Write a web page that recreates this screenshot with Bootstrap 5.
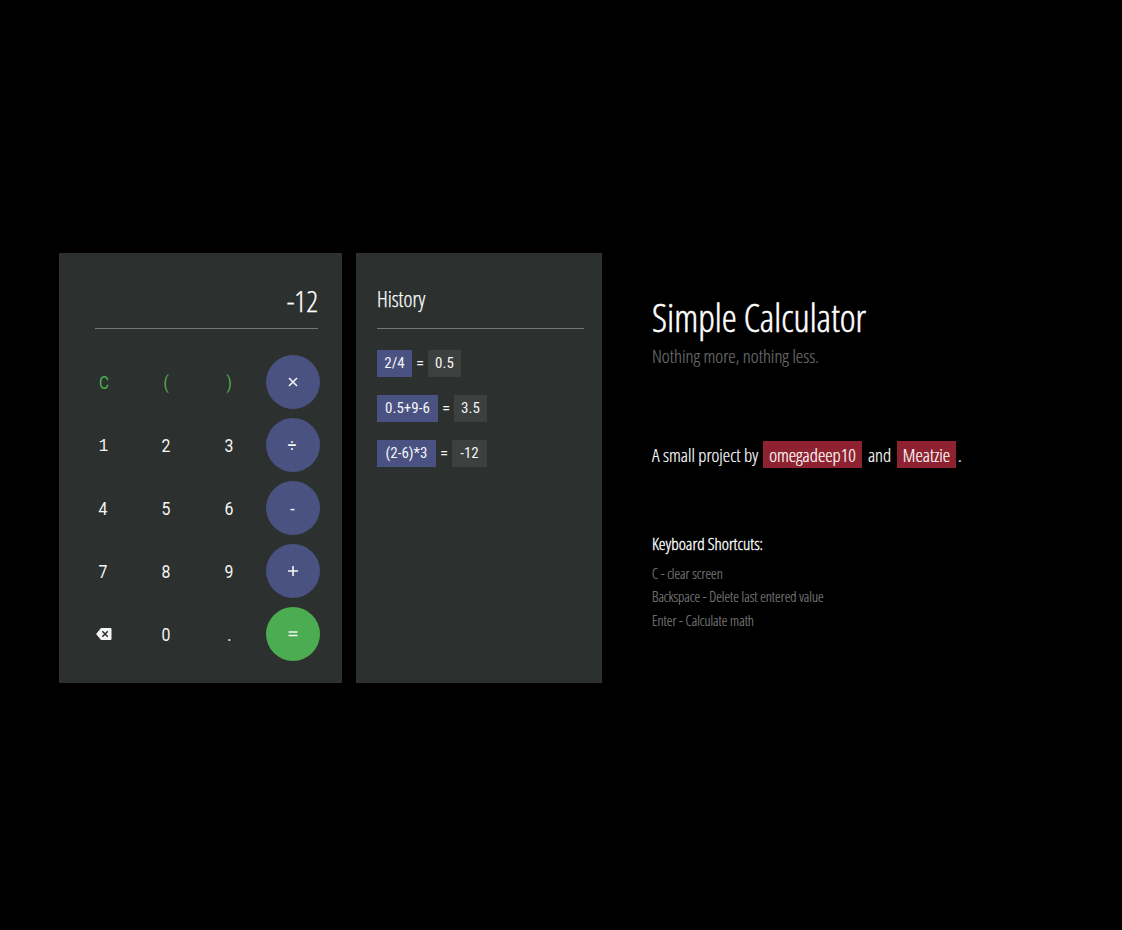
<!DOCTYPE html>
<html lang="en">
<head>
<meta charset="utf-8">
<meta name="viewport" content="width=device-width, initial-scale=1">
<title>Simple Calculator</title>
<link href="https://cdn.jsdelivr.net/npm/bootstrap@5.3.0/dist/css/bootstrap.min.css" rel="stylesheet">
<style>
body{background:#000;color:#fff;font-family:"Open Sans",sans-serif;font-weight:300;font-stretch:75%;padding:253px 0 0 59px;overflow:hidden;height:930px}
.panel{background:#2c302e;height:430px;flex:none}
.calc{width:283px;padding:0 22.5px 0 17px}
.hist{width:246px;margin-left:14px;padding:0 18px 0 21px}
.screen{height:76px;border-bottom:1px solid #777;line-height:42px;padding-top:27px;-webkit-text-stroke:.25px}
.calc .screen{margin:0 1.5px 26px 19px;font-size:29px}
.hist .screen{font-size:21.3px;line-height:38px;margin-bottom:21px}
.keys{display:grid;grid-template-columns:repeat(4,54px);gap:9px;margin-left:.5px;font-family:Roboto,sans-serif;font-weight:400}
.key{width:54px;height:54px;border-radius:50%;border:0;background:none;color:#f5f5f5;font-size:18px;line-height:54px;padding:0;display:flex;align-items:center;justify-content:center}
.key span{position:relative;top:.5px;transform:scaleX(.88)}
.key.fn{color:#4caf50}
.key.fn span{transform:scaleX(.85)}
.key.op{background:#4a5282}
.key.eq{background:#4bac52}
.key .mono{font-family:"Liberation Mono",monospace;font-size:18px;top:1px}
.entry{height:27px;margin-bottom:18px;font-family:Roboto,sans-serif;font-size:15px;font-weight:400;line-height:27px;color:#f5f5f5}
.chip{display:block;text-align:center;background:#4a5282;white-space:nowrap}
.chip.res{background:#3c403e}
.entry .sign{width:16px;text-align:center;font-size:17px}
.about{margin-left:50px;white-space:nowrap;-webkit-text-stroke:.2px}
h1{font-size:37.8px;line-height:50px;font-weight:300;margin:40px 0 0;-webkit-text-stroke:.5px}
.tagline{font-size:18.7px;line-height:26px;color:#6c6c6c;margin:0 0 72px}
.credits{font-size:18.6px;line-height:28px;margin:0 0 64px}
.credits a{color:#fff;background:#8e2230;text-decoration:none;display:inline-block;text-align:center;height:27px}
h2{font-size:17px;line-height:24px;font-weight:300;margin:-1px 0 6px;-webkit-text-stroke:.35px}
.shortcuts{font-size:14.25px;line-height:23.4px;color:#7c7c7c}
</style>
</head>
<body>
<main class="d-flex align-items-start">
<section class="panel calc">
<div class="screen text-end"><span>-12</span></div>
<div class="keys">
<button class="key fn"><span>C</span></button><button class="key fn"><span>(</span></button><button class="key fn"><span>)</span></button><button class="key op"><svg width="12" height="12" viewBox="0 0 12 12" stroke="#f5f5f5" stroke-width="1.6"><path d="M2 2l8 8M10 2l-8 8"/></svg></button>
<button class="key"><span class="mono">1</span></button><button class="key"><span>2</span></button><button class="key"><span>3</span></button><button class="key op"><span>÷</span></button>
<button class="key"><span>4</span></button><button class="key"><span>5</span></button><button class="key"><span>6</span></button><button class="key op"><span>-</span></button>
<button class="key"><span>7</span></button><button class="key"><span>8</span></button><button class="key"><span>9</span></button><button class="key op"><svg width="12" height="12" viewBox="0 0 12 12" stroke="#f5f5f5" stroke-width="1.6"><path d="M6 1v10M1 6h10"/></svg></button>
<button class="key" aria-label="Backspace"><svg width="16" height="12" viewBox="0 0 16 12"><path d="M5 0h9.5a1 1 0 0 1 1 1v10a1 1 0 0 1-1 1H5L.5 6.5v-1z" fill="#f5f5f5"/><path d="M6.3 3.2l5.5 5.6M11.8 3.2L6.3 8.8" stroke="#2c302e" stroke-width="1.5"/></svg></button><button class="key"><span>0</span></button><button class="key"><span>.</span></button><button class="key eq"><svg width="10" height="8" viewBox="0 0 10 8" stroke="#f5f5f5" stroke-width="1.6"><path d="M.5 2h9M.5 5.5h9"/></svg></button>
</div>
</section>
<section class="panel hist">
<div class="screen">History</div>
<div class="entry d-flex"><span class="chip" style="width:35px">2/4</span><span class="sign">=</span><span class="chip res" style="width:33px">0.5</span></div>
<div class="entry d-flex"><span class="chip" style="width:61px">0.5+9-6</span><span class="sign">=</span><span class="chip res" style="width:33px">3.5</span></div>
<div class="entry d-flex"><span class="chip" style="width:59px">(2-6)*3</span><span class="sign">=</span><span class="chip res" style="width:35px">-12</span></div>
</section>
<section class="about">
<h1>Simple Calculator</h1>
<p class="tagline">Nothing more, nothing less.</p>
<p class="credits d-flex"><span style="width:111px">A small project by</span><a href="#" style="width:99px">omegadeep10</a><span class="text-center" style="width:35px">and</span><a href="#" style="width:59px">Meatzie</a><span style="padding-left:2px">.</span></p>
<h2>Keyboard Shortcuts:</h2>
<div class="shortcuts"><div>C - clear screen</div><div>Backspace - Delete last entered value</div><div>Enter - Calculate math</div></div>
</section>
</main>
<script src="https://cdn.jsdelivr.net/npm/bootstrap@5.3.0/dist/js/bootstrap.bundle.min.js"></script>
</body>
</html>
